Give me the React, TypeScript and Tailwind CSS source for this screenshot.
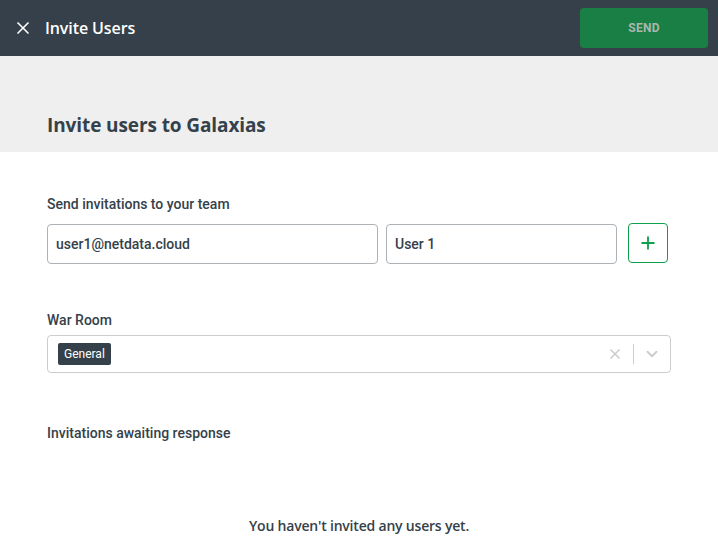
import React from 'react';
import { X, Plus, ChevronDown } from 'lucide-react';

const App = () => {
  return (
    <div className="w-[718px] h-[559px] overflow-hidden bg-white font-['Roboto',sans-serif] text-[#35414a]">
      {/* Header */}
      <header className="h-14 bg-[#35404a] flex items-center justify-between pl-[13px] pr-[10px]">
        <div className="flex items-center">
          <X size={20} strokeWidth={2} className="text-white" />
          <span className="ml-[12px] text-white text-[16px] font-semibold font-['Open_Sans',sans-serif] tracking-[-0.1px]">
            Invite Users
          </span>
        </div>
        <button className="w-32 h-10 rounded bg-[#1a7f45] text-[#a9b7ae] text-[12px] font-bold tracking-wide">
          SEND
        </button>
      </header>

      {/* Title band */}
      <div className="h-24 bg-[#efefef] flex items-end pl-[47px] pb-[13px]">
        <h1 className="text-[19px] font-bold font-['Open_Sans',sans-serif] tracking-[-0.1px] leading-7">
          Invite users to Galaxias
        </h1>
      </div>

      <div className="px-[47px]">
        <div className="pt-[42px] text-[14px] font-medium leading-5">Send invitations to your team</div>
        <div className="flex items-center mt-[10px]">
          <div className="w-[331px] h-10 border border-[#adb2b6] rounded flex items-center px-2 text-[14px] font-medium">
            user1@netdata.cloud
          </div>
          <div className="w-[231px] h-10 ml-2 border border-[#adb2b6] rounded flex items-center px-2 text-[14px] font-medium">
            User 1
          </div>
          <button className="w-10 h-10 ml-[11px] -mt-[2px] border border-[#0e9f4b] rounded flex items-center justify-center">
            <Plus size={20} strokeWidth={2.2} className="text-[#0e9f4b]" />
          </button>
        </div>

        <div className="pt-[46px] text-[14px] font-medium leading-5">War Room</div>
        <div className="mt-[5px] w-[624px] h-[38px] border border-[#cccccc] rounded flex items-center pl-[10px]">
          <span className="bg-[#35414a] text-white text-[12px] px-[6px] h-[22px] flex items-center rounded-[2px]">General</span>
          <div className="ml-auto flex items-center h-full">
            <X size={16} strokeWidth={2.5} className="text-[#cccccc] mr-[10px]" />
            <div className="w-px h-5 bg-[#cccccc]" />
            <ChevronDown size={18} strokeWidth={2.5} className="text-[#cccccc] mx-[9px]" />
          </div>
        </div>

        <div className="pt-[50px] text-[14px] font-medium leading-5">Invitations awaiting response</div>
        <div className="pt-[73px] text-center text-[14px] font-semibold font-['Open_Sans',sans-serif] leading-5 tracking-[-0.2px]">
          You haven't invited any users yet.
        </div>
      </div>
    </div>
  );
};

export default App;
